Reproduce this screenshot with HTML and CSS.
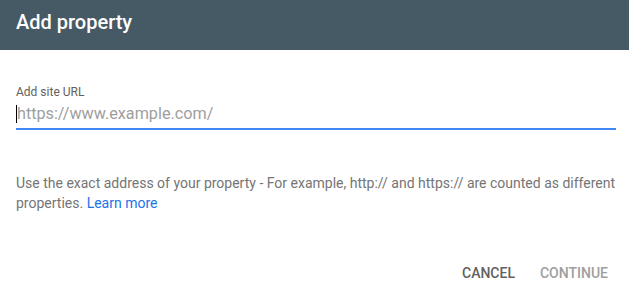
FILE: index.html
```html
<!DOCTYPE html>
<html>
<head>
<meta charset="utf-8">
<link rel="stylesheet" href="styles.css">
</head>
<body>
<div class="dialog">
  <div class="header"><h1 class="title">Add property</h1></div>
  <div class="content">
    <label class="label">Add site URL</label>
    <div class="field">
      <span class="caret"></span><span class="placeholder">https://www.example.com/</span>
    </div>
    <p class="help">Use the exact address of your property - For example, http:// and https:// are counted as different properties. <a class="link" href="#">Learn more</a></p>
  </div>
  <div class="actions">
    <span class="btn cancel">CANCEL</span>
    <span class="btn continue">CONTINUE</span>
  </div>
</div>
</body>
</html>
```
FILE: styles.css
```css
html, body {
  margin: 0;
  padding: 0;
  background: #fff;
}
body {
  font-family: Roboto, "Liberation Sans", sans-serif;
  width: 629px;
  height: 292px;
  overflow: hidden;
}
.dialog {
  display: flex;
  flex-direction: column;
}
.header {
  background: #455a64;
  height: 50px;
  padding: 0 16px;
  display: flex;
  align-items: center;
  box-sizing: border-box;
}
.title {
  margin: 0;
  color: #fff;
  font-size: 20px;
  font-weight: 500;
  line-height: 24px;
  padding-bottom: 6px;
}
.content {
  padding: 34px 13px 0 16px;
  display: flex;
  flex-direction: column;
}
.label {
  font-size: 12px;
  line-height: 16px;
  color: #616161;
}
.field {
  margin-top: 3px;
  height: 25px;
  border-bottom: 2px solid #4285f4;
  display: flex;
  align-items: flex-start;
}
.caret {
  width: 1px;
  height: 18px;
  background: #000;
  margin-top: 2px;
}
.placeholder {
  font-size: 16.2px;
  line-height: 22px;
  color: #9e9e9e;
}
.help {
  margin: 43px 0 0 0;
  font-size: 14px;
  line-height: 20px;
  color: #757575;
}
.link {
  color: #1a73e8;
  text-decoration: none;
}
.actions {
  display: flex;
  justify-content: flex-end;
  gap: 25px;
  padding: 50px 21px 0 0;
}
.btn {
  font-size: 14px;
  font-weight: 500;
  line-height: 20px;
  letter-spacing: 0;
}
.cancel { color: #616161; }
.continue { color: #9e9e9e; }
```
